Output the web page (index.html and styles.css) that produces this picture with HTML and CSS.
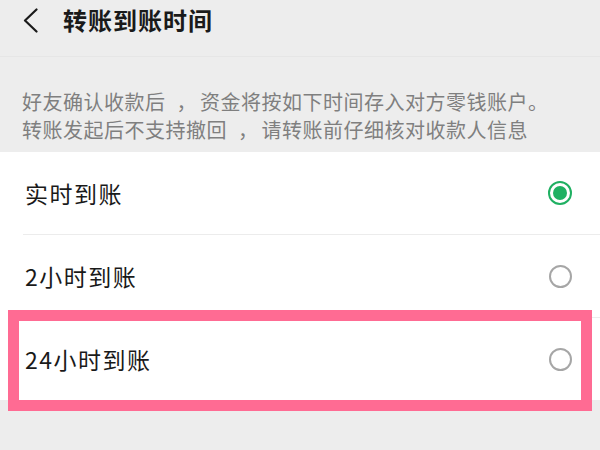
FILE: index.html
```html
<!DOCTYPE html>
<html lang="zh-CN">
<head>
<meta charset="utf-8">
<title>转账到账时间</title>
<link rel="stylesheet" href="styles.css">
</head>
<body>
<header class="topbar">
  <span class="back">
    <svg width="16" height="26" viewBox="0 0 16 26"><path d="M13.5 1.5 L2 12.5 L13.5 23.5" fill="none" stroke="#1a1a1a" stroke-width="2.2" stroke-linecap="round" stroke-linejoin="round"/></svg>
  </span>
  <h1 class="title">转账到账时间</h1>
</header>
<section class="notice">
  <p>好友确认收款后<span class="comma">，</span>资金将按如下时间存入对方零钱账户。</p>
  <p>转账发起后不支持撤回<span class="comma">，</span>请转账前仔细核对收款人信息</p>
</section>
<ul class="options">
  <li class="option"><span class="label">实时到账</span><span class="radio checked"></span></li>
  <li class="option"><span class="label">2小时到账</span><span class="radio"></span></li>
  <li class="option last"><span class="label">24小时到账</span><span class="radio"></span><span class="highlight"></span></li>
</ul>
<div class="rest"></div>
</body>
</html>
```
FILE: styles.css
```css
html, body {
  margin: 0;
  padding: 0;
  background: #ededed;
  font-family: "Noto Sans CJK SC", "Noto Sans", sans-serif;
}
body {
  min-height: 450px;
}
.topbar {
  display: flex;
  align-items: center;
  height: 57px;
  padding: 0 0 16px 23px;
  box-sizing: border-box;
  border-bottom: 1px solid #e6e6e6;
}
.back {
  display: flex;
  width: 16px;
  height: 26px;
  margin-top: 1px;
}
.title {
  margin: 0 0 0 24px;
  font-size: 24px;
  font-weight: 700;
  letter-spacing: 1px;
  color: #1a1a1a;
  line-height: 28px;
}
.notice {
  padding: 31px 0 8px 22px;
  color: #7f7f7f;
  font-size: 20px;
  letter-spacing: 0.5px;
  line-height: 28px;
}
.notice p {
  margin: 0;
  white-space: nowrap;
}
.comma {
  margin-left: 11px;
  margin-right: 3px;
}
.options {
  list-style: none;
  margin: 0;
  padding: 0;
  background: #ffffff;
}
.option {
  position: relative;
  display: flex;
  align-items: center;
  justify-content: space-between;
  height: 82px;
  margin-left: 23px;
  padding-left: 2px;
  padding-right: 28px;
  border-bottom: 1px solid #ececec;
}
.option.last {
  border-bottom: none;
}
.label {
  font-size: 23px;
  letter-spacing: 1.5px;
  color: #1a1a1a;
}
.radio {
  width: 23px;
  height: 23px;
  box-sizing: border-box;
  border: 2px solid #a6a6a6;
  border-radius: 50%;
  display: flex;
  align-items: center;
  justify-content: center;
}
.radio.checked {
  width: 24px;
  height: 24px;
  border-color: #1fb062;
}
.radio.checked::after {
  content: "";
  width: 14px;
  height: 14px;
  border-radius: 50%;
  background: #1fb062;
}
.highlight {
  position: absolute;
  top: -8px;
  left: -15px;
  right: 8px;
  height: 101px;
  box-sizing: border-box;
  border: 11px solid #ff6b93;
  pointer-events: none;
  z-index: 2;
}
.rest {
  height: 50px;
}
```
